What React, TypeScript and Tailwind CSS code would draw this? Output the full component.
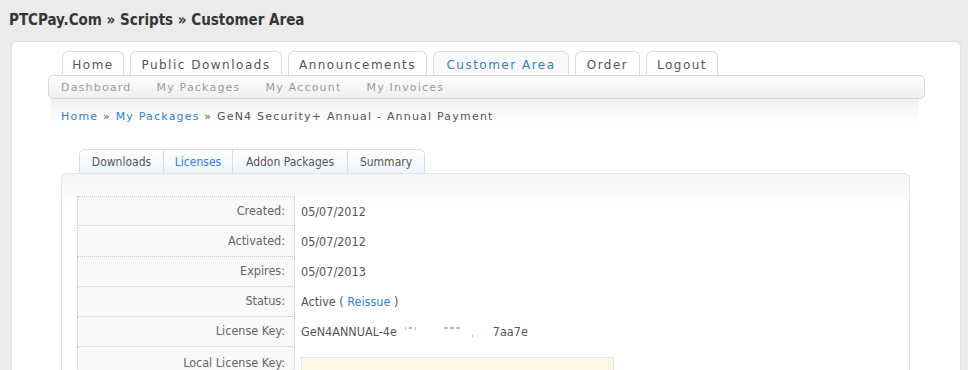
import React from 'react';

const topTabs = [
    { label: 'Home', w: 'w-[62px]' },
    { label: 'Public Downloads', w: 'w-[152px]' },
    { label: 'Announcements', w: 'w-[139px]' },
    { label: 'Customer Area', w: 'w-[136px]', active: true },
    { label: 'Order', w: 'w-[65px]' },
    { label: 'Logout', w: 'w-[72px]' },
];

const subNav = ['Dashboard', 'My Packages', 'My Account', 'My Invoices'];

const pkgTabs = [
    { label: 'Downloads', w: 'w-[83px]' },
    { label: 'Licenses', w: 'w-[69px]', active: true },
    { label: 'Addon Packages', w: 'w-[115px]' },
    { label: 'Summary', w: 'w-[77px]' },
];

function Row({ label, children, first }: { label: string; children: React.ReactNode; first?: boolean }) {
    return (
        <div className="flex">
            <div
                className={
                    'w-[218px] h-[30px] shrink-0 flex items-center justify-end pr-[9px] bg-[#f8f8f8] text-[#666] border-l border-r border-b border-dotted border-[#c8c8c8]' +
                    (first ? ' border-t' : '')
                }
            >
                {label}
            </div>
            <div className={'flex items-center pl-[6px] h-[30px] text-[#555]' + (first ? ' mt-[1px]' : '')}>{children}</div>
        </div>
    );
}

// little grey specks left over where the key was blanked out
function Speck({ w, h, className }: { w: string; h: string; className: string }) {
    return <span className={'inline-block bg-[#bbb] ' + w + ' ' + h + ' ' + className} />;
}

export default function App() {
    return (
        <div className="min-h-[370px] bg-[#ebebeb] overflow-hidden font-['Tahoma','DejaVu_Sans_Condensed','Liberation_Sans',sans-serif]">
            <h1 className="h-[41px] pl-[9px] pt-[10px] text-[15px] leading-[20px] font-bold text-[#363636]">
                PTCPay.Com » Scripts » Customer Area
            </h1>

            <div className="ml-[11px] w-[950px] h-[340px] bg-white border border-[#e0e0e0] rounded-t-[6px]">
                {/* main tabs */}
                <div className="flex gap-[6px] ml-[50px] mt-[9px] font-['Verdana','DejaVu_Sans',sans-serif] text-[12px] tracking-[1.5px]">
                    {topTabs.map(t => (
                        <div
                            key={t.label}
                            className={
                                t.w +
                                ' h-[24px] flex items-center justify-center pt-[3px] border border-b-0 border-[#dcdcdc] rounded-t-[6px] ' +
                                (t.active ? 'bg-[#f9f9f9] text-[#2f7fd8]' : 'bg-white text-[#555]')
                            }
                        >
                            {t.label}
                        </div>
                    ))}
                </div>

                {/* sub nav */}
                <div className="ml-[36px] w-[877px] h-[24px] flex items-center gap-[25px] pl-[12px] pt-[3px] border border-[#d6d6d6] rounded-[5px] bg-gradient-to-b from-[#fdfdfd] to-[#efefef] font-['Verdana','DejaVu_Sans',sans-serif] text-[11px] tracking-[1.2px] text-[#9a9a9a]">
                    {subNav.map(s => (
                        <span key={s}>{s}</span>
                    ))}
                </div>

                {/* breadcrumb */}
                <div className="ml-[39px] w-[868px] h-[26px] pl-[10px] pt-[11px] bg-gradient-to-b from-[#f1f1f1] to-white font-['Verdana','DejaVu_Sans',sans-serif] text-[11px] leading-[14px] tracking-[1.2px] text-[#555]">
                    <span className="text-[#2f7fd8]">Home</span> » <span className="text-[#2f7fd8]">My Packages</span> » GeN4
                    Security+ Annual - Annual Payment
                </div>

                {/* package tabs */}
                <div className="flex ml-[67px] mt-[24px] w-max border border-b-0 border-[#dcdcdc] rounded-t-[6px] overflow-hidden text-[12px]">
                    {pkgTabs.map((t, i) => (
                        <div
                            key={t.label}
                            className={
                                t.w +
                                ' h-[23px] flex items-center justify-center bg-gradient-to-b from-white to-[#edf4fc] ' +
                                (i > 0 ? 'border-l border-[#dcdcdc] ' : '') +
                                (t.active ? 'text-[#2f7fd8]' : 'text-[#555]')
                            }
                        >
                            {t.label}
                        </div>
                    ))}
                </div>

                {/* licence panel */}
                <div className="ml-[49px] w-[849px] h-[200px] border border-[#e4e4e4] rounded-t-[6px] bg-gradient-to-b from-[#f5f5f5] to-white to-[30px] pt-[22px] pl-[15px] text-[12.5px]">
                    <Row label="Created:" first>
                        05/07/2012
                    </Row>
                    <Row label="Activated:">05/07/2012</Row>
                    <Row label="Expires:">05/07/2013</Row>
                    <Row label="Status:">
                        Active (&nbsp;<span className="text-[#2f7fd8]">Reissue</span>&nbsp;)
                    </Row>
                    <Row label="License Key:">
                        <span>GeN4ANNUAL-4e</span>
                        <span className="flex gap-[3px] self-start mt-[10px] ml-[8px]">
                            <Speck w="w-[1px]" h="h-[3px]" className="" />
                            <Speck w="w-[3px]" h="h-[2px]" className="" />
                            <Speck w="w-[1px]" h="h-[3px]" className="" />
                        </span>
                        <span className="flex gap-[2px] self-start mt-[10px] ml-[28px]">
                            <Speck w="w-[4px]" h="h-[2px]" className="" />
                            <Speck w="w-[4px]" h="h-[2px]" className="" />
                            <Speck w="w-[4px]" h="h-[2px]" className="" />
                        </span>
                        <Speck w="w-[1px]" h="h-[2px]" className="self-end mb-[10px] ml-[12px]" />
                        <span className="ml-[20px]">7aa7e</span>
                    </Row>
                    <div className="flex">
                        <div className="w-[218px] h-[40px] shrink-0 flex justify-end pr-[9px] pt-[7px] bg-[#f8f8f8] text-[#666] border-l border-r border-dotted border-[#c8c8c8]">
                            Local License Key:
                        </div>
                        <div className="pl-[6px] pt-[10px]">
                            <div className="w-[313px] h-[40px] bg-[#fdf8e5] border border-[#e6e6e6]" />
                        </div>
                    </div>
                </div>
            </div>
        </div>
    );
}
